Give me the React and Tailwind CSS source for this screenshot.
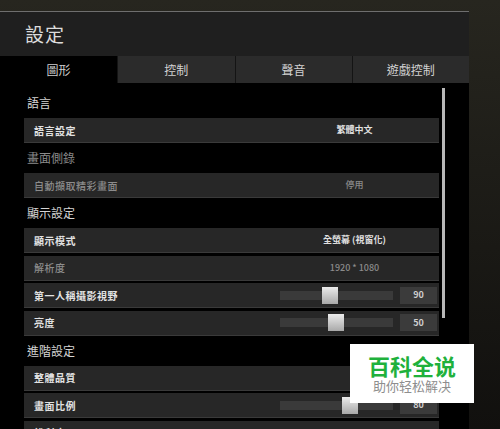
const font = { fontFamily: '"Noto Sans CJK TC", "Noto Sans", sans-serif' };

const tabs = ["圖形", "控制", "聲音", "遊戲控制"];

function Heading({ children, dim }) {
  return (
    <div
      className={`flex h-[30px] shrink-0 items-center pl-[3px] text-[12px] ${
        dim ? "text-[#8a8a8a]" : "text-[#d4d4d4]"
      }`}
    >
      {children}
    </div>
  );
}

function Row({ label, value, dim, slider, num }) {
  return (
    <div className="flex h-[25px] shrink-0 items-center border-b border-[#3a3a3a] bg-[#272727]">
      <div
        className={`flex-1 pl-[10px] text-[10px] tracking-[0.5px] ${
          dim ? "font-medium text-[#8c8c8c]" : "font-bold text-[#e2e2e2]"
        }`}
      >
        {label}
      </div>
      <div className="flex w-[169px] items-center">
        {slider !== undefined ? (
          <div className="flex items-center pl-[10px]">
            <div className="relative h-[9px] w-[113px] bg-[#3a3a3a]">
              <div
                className="absolute top-[-4px] h-[17px] w-[16px] bg-linear-to-b from-[#ececec] to-[#a9a9a9]"
                style={{ left: slider }}
              />
            </div>
            <div className="ml-[7px] flex h-[17px] w-[37px] items-center justify-center bg-[#3b3b3b] text-[9px] font-bold text-[#cfcfcf]">
              {num}
            </div>
          </div>
        ) : (
          <div
            className={`w-full text-center text-[9px] ${
              dim ? "font-medium text-[#8a8a8a]" : "font-bold text-[#e0e0e0]"
            }`}
          >
            {value}
          </div>
        )}
      </div>
    </div>
  );
}

export default function App() {
  return (
    <div
      className="relative h-[429px] w-[500px] overflow-hidden bg-linear-to-b from-[#27261f] to-[#11100e]"
      style={font}
    >
      <div className="mt-[11px] w-[469px] border-t border-[#6e6e6e] bg-black">
        {/* Title */}
        <div className="flex h-[44px] items-center bg-[#1f1f1f] pl-[25px] text-[19px] tracking-[1px] text-[#dcdcdc]">
          設定
        </div>

        {/* Tabs */}
        <div className="grid h-[27px] grid-cols-4">
          {tabs.map((t, i) => (
            <div
              key={t}
              className={`flex items-center justify-center text-[12px] ${
                i === 0
                  ? "bg-black text-[#cfcfcf]"
                  : "border-l border-[#141414] bg-[#2b2b2b] text-[#d2d2d2]"
              }`}
            >
              {t}
            </div>
          ))}
        </div>

        {/* Content */}
        <div className="flex h-[346px] overflow-hidden pt-[5px]">
          <div className="ml-[24px] flex w-[415px] shrink-0 flex-col">
            <Heading>語言</Heading>
            <Row label="語言設定" value="繁體中文" />
            <Heading dim>畫面側錄</Heading>
            <Row label="自動擷取精彩畫面" value="停用" dim />
            <Heading>顯示設定</Heading>
            <div className="flex shrink-0 flex-col gap-[2.5px]">
              <Row label="顯示模式" value="全螢幕 (視窗化)" />
              <Row label="解析度" value="1920 * 1080" dim />
              <Row label="第一人稱攝影視野" slider={42} num="90" />
              <Row label="亮度" slider={48} num="50" />
            </div>
            <Heading>進階設定</Heading>
            <div className="flex shrink-0 flex-col gap-[2.5px]">
              <Row label="整體品質" value="" />
              <Row label="畫面比例" slider={62} num="80" />
              <Row label="銳利度" value="" />
            </div>
          </div>
          <div className="ml-[3px] h-[230px] w-[3px] shrink-0 bg-[#b8b8b8]" />
        </div>
      </div>

      {/* Watermark */}
      <div
        className="absolute left-[350px] top-[344px] flex h-[59px] w-[124px] flex-col items-center justify-center gap-[1px] bg-white"
        style={{ fontFamily: '"Noto Sans CJK SC", sans-serif' }}
      >
        <div className="text-[22px] font-bold leading-[24px] text-[#1fb13c]">百科全说</div>
        <div className="text-[13px] leading-[16px] text-[#8e8e8e]">助你轻松解决</div>
      </div>
    </div>
  );
}
